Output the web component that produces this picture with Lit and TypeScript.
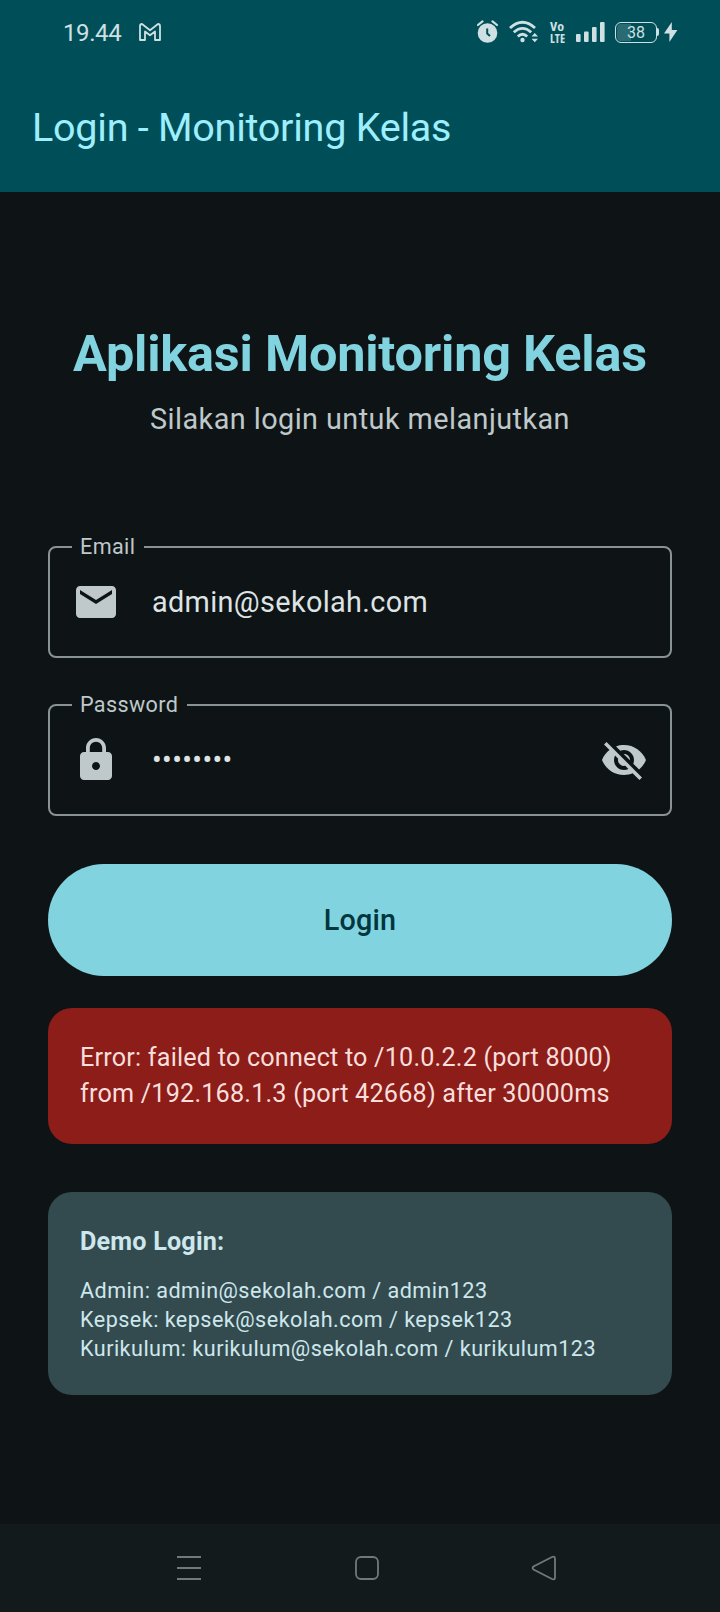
import { LitElement, html, css, svg } from "lit";
import { customElement, property } from "lit/decorators.js";

const mail = svg`<path d="M20 4H4c-1.1 0-1.99.9-1.99 2L2 18c0 1.1.9 2 2 2h16c1.1 0 2-.9 2-2V6c0-1.1-.9-2-2-2zm0 4l-8 5-8-5V6l8 5 8-5v2z"/>`;
const lock = svg`<path d="M18 8h-1V6c0-2.76-2.24-5-5-5S7 3.24 7 6v2H6c-1.1 0-2 .9-2 2v10c0 1.1.9 2 2 2h12c1.1 0 2-.9 2-2V10c0-1.1-.9-2-2-2zm-6 9c-1.1 0-2-.9-2-2s.9-2 2-2 2 .9 2 2-.9 2-2 2zm3.1-9H8.9V6c0-1.71 1.39-3.1 3.1-3.1 1.71 0 3.1 1.39 3.1 3.1v2z"/>`;
const eyeOff = svg`<path d="M12 7c2.76 0 5 2.24 5 5 0 .65-.13 1.26-.36 1.83l2.92 2.92c1.51-1.26 2.7-2.89 3.43-4.75-1.73-4.39-6-7.5-11-7.5-1.4 0-2.74.25-3.98.7l2.16 2.16C10.74 7.13 11.35 7 12 7zM2 4.27l2.28 2.28.46.46C3.08 8.3 1.78 10.02 1 12c1.73 4.39 6 7.5 11 7.5 1.55 0 3.03-.3 4.38-.84l.42.42L19.73 22 21 20.73 3.27 3 2 4.27zM7.53 9.8l1.55 1.55c-.05.21-.08.43-.08.65 0 1.66 1.34 3 3 3 .22 0 .44-.03.65-.08l1.55 1.55c-.67.33-1.41.53-2.2.53-2.76 0-5-2.24-5-5 0-.79.2-1.53.53-2.2zm4.31-.78l3.15 3.15.02-.16c0-1.66-1.34-3-3-3l-.17.01z"/>`;

@customElement("status-bar")
class StatusBar extends LitElement {
  static styles = css`
    :host { display: flex; align-items: center; height: 64px; padding: 0 42px 0 63px; color: #cfe0e2; box-sizing: border-box; }
    .time { font-size: 24px; line-height: 28px; width: 58px; margin-right: 18px; letter-spacing: -.4px; padding-top: 1px; }
    .spacer { flex: 1; }
    .icons { display: flex; align-items: center; }
    svg { display: block; fill: currentColor; }
    .alarm { margin-right: 11px; }
    .wifi { margin-right: 10px; }
    .volte { margin-right: 11px; overflow: visible; font: 700 13px "Open Sans", sans-serif; font-stretch: 75%; }
    .signal { margin-right: 10px; }
    .battery { display: flex; align-items: center; justify-content: center; box-sizing: border-box; width: 42px; height: 21px; border: 1.5px solid #cfe0e2; border-radius: 6px; font-size: 16px; line-height: 18px; background: linear-gradient(90deg, #2a6b73 38%, transparent 38%); background-clip: content-box; padding: 1px; }
    .digits { padding-top: 2px; }
    .tip { width: 2px; height: 8px; background: #cfe0e2; border-radius: 0 2px 2px 0; margin: 0 5px 0 0; }
  `;
  render() {
    return html`
      <span class="time">19.44</span>
      <svg width="22" height="18" viewBox="0 0 22 18"><path d="M1 3Q1 1 3 1L11 7.2 19 1Q21 1 21 3V17H16V8.5L11 12.3 6 8.5V17H1Z" fill="none" stroke="currentColor" stroke-width="1.8" stroke-linejoin="round"/></svg>
      <span class="spacer"></span>
      <div class="icons">
        <svg class="alarm" width="21" height="24" viewBox="0 0 21 24"><circle cx="10.5" cy="13" r="9.8"/><path d="M1 5L5.5 1.4M20 5L15.5 1.4" stroke="currentColor" stroke-width="2.2" stroke-linecap="round"/><path d="M10.2 8.5V13.5L13 16" fill="none" stroke="#004f58" stroke-width="2"/></svg>
        <svg class="wifi" width="30" height="24" viewBox="0 0 30 24"><g fill="none" stroke="currentColor" stroke-width="2.8"><path d="M1 8Q13.5-3.5 26 8"/><path d="M4.8 12.3Q13.5 4.5 22.2 12.3"/><path d="M8.8 16.4Q13.5 12 18.2 16.4"/></g><circle cx="13.5" cy="20" r="2.2"/><path d="M22.5 16.5L25.8 13 29 16.5ZM22.5 18.8H29L25.8 22.3Z"/></svg>
        <svg class="volte" width="16" height="21" viewBox="0 0 16 21"><text x="1" y="9.3" textLength="14" lengthAdjust="spacingAndGlyphs">Vo</text><text x="1" y="20.5" textLength="15" lengthAdjust="spacingAndGlyphs">LTE</text></svg>
        <svg class="signal" width="29" height="20" viewBox="0 0 29 20"><rect y="12" width="4.6" height="8" rx="1"/><rect x="8" y="9.5" width="4.6" height="10.5" rx="1"/><rect x="16" y="5" width="4.6" height="15" rx="1"/><rect x="24" width="4.6" height="20" rx="1"/></svg>
        <span class="battery"><span class="digits">38</span></span><span class="tip"></span>
        <svg width="14" height="20" viewBox="0 0 14 20"><path d="M7.8 0L0 11.5H5.4V20L13.4 8H7.8Z"/></svg>
      </div>`;
  }
}

@customElement("text-field")
class TextField extends LitElement {
  @property() label = "";
  @property() value = "";
  @property({ attribute: false }) leading: unknown;
  @property({ attribute: false }) trailing: unknown;
  @property({ type: Boolean }) masked = false;
  static styles = css`
    :host { display: block; }
    .box { position: relative; display: flex; align-items: center; box-sizing: border-box; height: 112px; border: 2px solid #899294; border-radius: 8px; padding: 0 22px; }
    .label { position: absolute; top: -15px; left: 22px; padding: 0 9px 0 8px; background: #0e1415; color: #bfc8ca; font-size: 21.6px; line-height: 28.8px; letter-spacing: .36px; }
    svg { display: block; width: 48px; height: 48px; fill: #bfc8ca; flex: none; }
    .value { flex: 1; margin-left: 32px; padding-top: 1px; color: #dee3e5; font-size: 28.8px; line-height: 43px; letter-spacing: .36px; }
  `;
  render() {
    const text = this.masked ? "•".repeat(this.value.length) : this.value;
    return html`<div class="box">
      <span class="label">${this.label}</span>
      <svg viewBox="0 0 24 24">${this.leading}</svg>
      <span class="value">${text}</span>
      ${this.trailing ? html`<svg viewBox="0 0 24 24">${this.trailing}</svg>` : null}
    </div>`;
  }
}

@customElement("app-root")
class AppRoot extends LitElement {
  static styles = css`
    :host { display: flex; flex-direction: column; width: 720px; height: 1612px; background: #0e1415; font-family: Roboto, sans-serif; }
    .header { height: 192px; background: #004f58; color: #9eeffd; }
    .title { display: flex; align-items: center; height: 126px; padding: 0 32px; font-size: 39.6px; letter-spacing: -.27px; }
    .body { flex: 1; display: flex; flex-direction: column; padding: 129px 48px 0; }
    .headline { color: #82d3e0; font-weight: 700; font-size: 50.4px; line-height: 65px; letter-spacing: -.2px; text-align: center; }
    .sub { margin: 12px 0 105px; color: #bfc8ca; font-size: 28.8px; line-height: 43px; letter-spacing: .45px; text-align: center; }
    .fields { display: grid; gap: 46px; }
    .button { margin: 48px 0 32px; height: 112px; border: 0; border-radius: 56px; background: #82d3e0; color: #00363d; font: 500 28.8px/36px Roboto, sans-serif; letter-spacing: .18px; }
    .card { border-radius: 24px; padding: 32px; }
    .error { background: #8c1d18; color: #f9dedc; font-size: 25.2px; line-height: 36px; letter-spacing: .2px; margin-bottom: 48px; }
    .demo { background: #334b4f; color: #cde7ec; }
    .demo-title { font-weight: 700; font-size: 25.2px; line-height: 36px; letter-spacing: .18px; margin-bottom: 16px; }
    .account { font-size: 21.6px; line-height: 29px; letter-spacing: .46px; }
    .nav { display: flex; align-items: center; height: 88px; padding-left: 176px; background: #121a1b; }
    .nav svg { display: block; fill: none; stroke: #737979; stroke-width: 1.8; margin-right: 151.5px; flex: none; }
  `;
  render() {
    return html`
      <div class="header"><status-bar></status-bar><div class="title">Login - Monitoring Kelas</div></div>
      <div class="body">
        <div class="headline">Aplikasi Monitoring Kelas</div>
        <div class="sub">Silakan login untuk melanjutkan</div>
        <div class="fields">
          <text-field label="Email" value="admin@sekolah.com" .leading=${mail}></text-field>
          <text-field label="Password" value="admin123" masked .leading=${lock} .trailing=${eyeOff}></text-field>
        </div>
        <button class="button">Login</button>
        <div class="card error">Error: failed to connect to /10.0.2.2 (port 8000)<br>from /192.168.1.3 (port 42668) after 30000ms</div>
        <div class="card demo">
          <div class="demo-title">Demo Login:</div>
          <div class="account">Admin: admin@sekolah.com / admin123</div>
          <div class="account">Kepsek: kepsek@sekolah.com / kepsek123</div>
          <div class="account">Kurikulum: kurikulum@sekolah.com / kurikulum123</div>
        </div>
      </div>
      <div class="nav">
        <svg width="26" height="26"><path d="M1 2H25M1 13H25M1 24H25"/></svg>
        <svg width="26" height="26"><rect x="2" y="2" width="22" height="22" rx="5"/></svg>
        <svg width="26" height="26"><path d="M2.5 11.5Q.8 13 2.5 14.5L21 24Q24 25 24 22.5V3.5Q24 1 21 2Z"/></svg>
      </div>`;
  }
}
